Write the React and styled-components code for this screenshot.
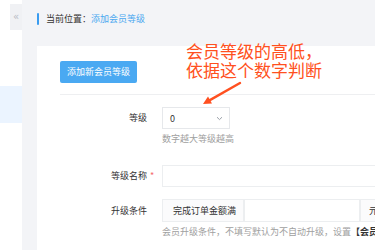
import React from "react";
import styled, { createGlobalStyle } from "styled-components";

const Global = createGlobalStyle`
  html, body { margin: 0; padding: 0; overflow: hidden; }
  body { font-family: "Noto Sans CJK SC", "Noto Sans", sans-serif; color: #333; }
  * { box-sizing: border-box; }
`;

const Page = styled.div`
  position: relative;
  display: flex;
  width: 375px;
  height: 250px;
  overflow: hidden;
`;

const Sidebar = styled.aside`
  width: 22px;
  flex-shrink: 0;
  background: #fff;
  display: flex;
  flex-direction: column;
`;

const Toggle = styled.div`
  margin: 4px 0 0 10px;
  width: 12px;
  height: 26px;
  background: #f0f1f4;
  color: #b8bcc4;
  font-size: 10px;
  line-height: 26px;
  text-align: center;
  font-family: "DejaVu Sans", sans-serif;
`;

const MenuItem = styled.div`
  margin-top: 56px;
  height: 37px;
  background: ${(p) => (p.$active ? "#ebf4ff" : "transparent")};
`;

const Main = styled.main`
  flex: 1;
  min-width: 0;
  background: #f3f4f7;
  padding-left: 15px;
  display: flex;
  flex-direction: column;
`;

const Header = styled.div`
  height: 46px;
  flex-shrink: 0;
  display: flex;
  align-items: flex-start;
  padding-top: 13px;
  font-size: 9px;
  line-height: 12px;
`;

const Bar = styled.span`
  width: 2px;
  height: 12px;
  background: #3a9cf0;
  border-radius: 1px;
  margin-right: 7px;
`;

const Crumb = styled.span`
  color: ${(p) => (p.$link ? "#4aa8f0" : "#333")};
  white-space: nowrap;
`;

const Card = styled.section`
  flex: 1;
  background: #fff;
  padding: 15px 0 0 23px;
  overflow: hidden;
`;

const PrimaryButton = styled.button`
  display: block;
  width: 77px;
  height: 22px;
  padding: 0;
  border: none;
  border-radius: 2px;
  background: #4aa9f2;
  color: #fff;
  font-family: inherit;
  font-size: 9px;
  line-height: 22px;
`;

const Divider = styled.div`
  margin-top: 11px;
  height: 1px;
  background: #eeeff1;
`;

const Form = styled.div`
  margin-top: 12px;
`;

const FormItem = styled.div`
  display: grid;
  grid-template-columns: 87px 1fr;
  column-gap: 15px;
  margin-bottom: ${(p) => p.$gap}px;
`;

const Label = styled.label`
  position: relative;
  text-align: right;
  font-size: 9px;
  line-height: ${(p) => p.$h}px;
  color: #333;
  white-space: nowrap;
`;

const Star = styled.span`
  position: absolute;
  left: 100%;
  margin-left: 3px;
  color: #f56c6c;
  font-size: 9px;
`;

const Field = styled.div`
  min-width: 0;
`;

const Select = styled.div`
  width: 68px;
  height: 22px;
  border: 1px solid #e6e8eb;
  display: flex;
  align-items: center;
  justify-content: space-between;
  padding: 0 6px 0 7px;
  font-size: 9px;
  color: #333;
`;

const Input = styled.div`
  width: ${(p) => p.$w}px;
  height: ${(p) => p.$h}px;
  border: 1px solid #eceef0;
  flex-shrink: 0;
`;

const Group = styled.div`
  display: flex;
  height: 23px;
`;

const Addon = styled.div`
  width: ${(p) => p.$w}px;
  flex-shrink: 0;
  height: 23px;
  border: 1px solid #eceef0;
  background: #fbfbfc;
  font-size: 9px;
  line-height: 21px;
  padding-left: ${(p) => p.$pl}px;
  color: #333;
  white-space: nowrap;
`;

const Help = styled.div`
  margin-top: 4px;
  font-size: 9px;
  line-height: 12px;
  color: #a0a0a0;
  white-space: nowrap;
`;

const Strong = styled.span`
  color: #333;
  font-weight: 600;
`;

const Note = styled.div`
  position: absolute;
  left: 186px;
  top: 41px;
  font-size: 17px;
  line-height: 19px;
  color: #ff5020;
  white-space: nowrap;
`;

const ArrowSvg = styled.svg`
  position: absolute;
  left: 198px;
  top: 78px;
`;

export default function App() {
  return (
    <>
      <Global />
      <Page>
        <Sidebar>
          <Toggle>«</Toggle>
          <MenuItem $active />
        </Sidebar>
        <Main>
          <Header>
            <Bar />
            <Crumb>当前位置：</Crumb>
            <Crumb $link>添加会员等级</Crumb>
          </Header>
          <Card>
            <PrimaryButton>添加新会员等级</PrimaryButton>
            <Divider />
            <Form>
              <FormItem $gap={20}>
                <Label $h={22}>等级</Label>
                <Field>
                  <Select>
                    <span>0</span>
                    <svg width="7" height="5" viewBox="0 0 7 5">
                      <path d="M1 1.2 L3.5 3.6 L6 1.2" fill="none" stroke="#9aa0a8" strokeWidth="1" />
                    </svg>
                  </Select>
                  <Help>数字越大等级越高</Help>
                </Field>
              </FormItem>
              <FormItem $gap={12}>
                <Label $h={22}>
                  等级名称<Star>*</Star>
                </Label>
                <Field>
                  <Input $w={260} $h={22} />
                </Field>
              </FormItem>
              <FormItem $gap={12}>
                <Label $h={23}>升级条件</Label>
                <Field>
                  <Group>
                    <Addon $w={82} $pl={10}>完成订单金额满</Addon>
                    <Input $w={116} $h={23} />
                    <Addon $w={60} $pl={8}>元</Addon>
                  </Group>
                  <Help>
                    会员升级条件，不填写默认为不自动升级，设置<Strong>【会员等级】</Strong>
                  </Help>
                </Field>
              </FormItem>
            </Form>
          </Card>
        </Main>
        <Note>
          会员等级的高低，
          <br />
          依据这个数字判断
        </Note>
        <ArrowSvg width="48" height="32" viewBox="0 0 48 32">
          <line x1="42" y1="5" x2="11" y2="22.6" stroke="#ff5020" strokeWidth="2.4" strokeLinecap="round" />
          <polygon points="5,26 14,25.6 10,18.6" fill="#ff5020" />
        </ArrowSvg>
      </Page>
    </>
  );
}
